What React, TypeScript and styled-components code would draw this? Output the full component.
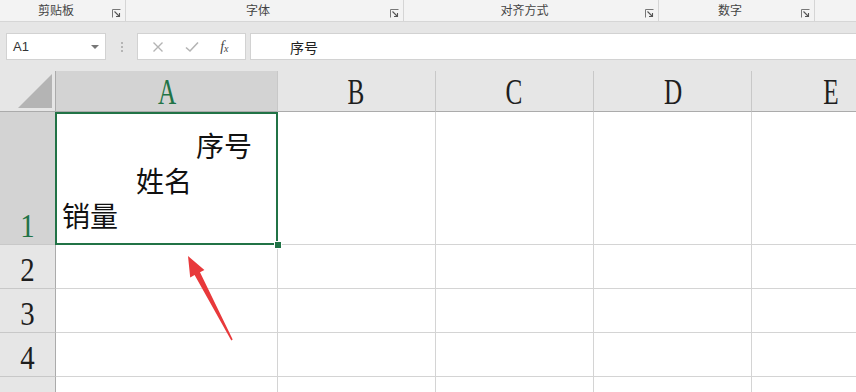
import React from 'react';
import styled, { createGlobalStyle } from 'styled-components';

const GlobalStyle = createGlobalStyle`
  html, body {
    margin: 0;
    padding: 0;
    background: #e6e6e6;
    overflow: hidden;
  }
  body {
    font-family: "Noto Sans CJK SC", "Liberation Sans", sans-serif;
  }
`;

const groups = [
  { label: '剪贴板', width: 126 },
  { label: '字体', width: 278 },
  { label: '对齐方式', width: 255 },
  { label: '数字', width: 156 },
  { label: '', width: 60 },
];

const columns = [
  { name: 'A', width: 222, active: true },
  { name: 'B', width: 158 },
  { name: 'C', width: 158 },
  { name: 'D', width: 158 },
  { name: 'E', width: 158 },
];

// row 5 is only partly on screen, its number sits below the fold
const rows = [
  { n: 1, height: 133, active: true, label: '1' },
  { n: 2, height: 44, label: '2' },
  { n: 3, height: 44, label: '3' },
  { n: 4, height: 44, label: '4' },
  { n: 5, height: 44, label: '' },
];

const cellLines = [
  { text: '序号', indent: 140 },
  { text: '姓名', indent: 80 },
  { text: '销量', indent: 6 },
];

const Launcher = () => (
  <LauncherIcon width="9" height="9" viewBox="0 0 9 9">
    <path d="M0.5 8.5 V0.5 H8.5" fill="none" stroke="#777" strokeWidth="1" />
    <path d="M2.5 2.5 L7.5 7.5 M4 7.5 H7.5 V4" fill="none" stroke="#555" strokeWidth="1.1" />
  </LauncherIcon>
);

const App = () => {
  return (
    <Page>
      <GlobalStyle />
      <Ribbon>
        {groups.map((g, i) => (
          <Group key={i} $width={g.width} $last={i === groups.length - 1}>
            <GroupLabel>{g.label}</GroupLabel>
            {g.label && <Launcher />}
          </Group>
        ))}
      </Ribbon>

      <FormulaBar>
        <NameBox>
          <span>A1</span>
          <DropArrow />
        </NameBox>
        <Dots>
          <i />
          <i />
          <i />
        </Dots>
        <ActionBox>
          <ActionBtn>
            <svg width="12" height="12" viewBox="0 0 12 12">
              <path d="M1.5 1.5 L10.5 10.5 M10.5 1.5 L1.5 10.5" stroke="#b4b4b4" strokeWidth="1.4" />
            </svg>
          </ActionBtn>
          <ActionBtn>
            <svg width="14" height="12" viewBox="0 0 14 12">
              <path d="M1 6.5 L5 10 L13 1.5" fill="none" stroke="#b4b4b4" strokeWidth="1.6" />
            </svg>
          </ActionBtn>
          <FxLabel>
            f<sub>x</sub>
          </FxLabel>
        </ActionBox>
        <FormulaInput>序号</FormulaInput>
      </FormulaBar>

      <Sheet>
        <Grid
          $cols={columns.map((c) => c.width)}
          $rows={rows.map((r) => r.height)}
        >
          <Corner>
            <svg width="34" height="34" viewBox="0 0 34 34">
              <polygon points="0,34 34,34 34,0" fill="#b4b4b4" />
            </svg>
          </Corner>
          {columns.map((c) => (
            <ColHeader key={c.name} $active={c.active}>
              <HeadText $active={c.active}>{c.name}</HeadText>
            </ColHeader>
          ))}
          {rows.map((r) => (
            <React.Fragment key={r.n}>
              <RowHeader $active={r.active}>
                <RowText $active={r.active}>{r.label}</RowText>
              </RowHeader>
              {columns.map((c) =>
                r.n === 1 && c.active ? (
                  <SelectedCell key={c.name}>
                    {cellLines.map((l) => (
                      <CellLine key={l.text} $indent={l.indent}>
                        {l.text}
                      </CellLine>
                    ))}
                    <Handle />
                  </SelectedCell>
                ) : (
                  <Cell key={c.name} />
                )
              )}
            </React.Fragment>
          ))}
        </Grid>
        <ArrowLayer width="856" height="321" viewBox="0 71 856 321">
          <polygon
            points="188,256 204.4,270 200,272.3 232.7,339.6 231.3,340.4 194.6,275.1 190.2,277.4"
            fill="#e8393b"
          />
        </ArrowLayer>
      </Sheet>
    </Page>
  );
};

const Page = styled.div`
  width: 856px;
  height: 392px;
  overflow: hidden;
  background: #e6e6e6;
`;

const Ribbon = styled.div`
  display: flex;
  height: 22px;
  background: #f3f3f3;
  border-bottom: 1px solid #d6d6d6;
  box-sizing: border-box;
`;

const Group = styled.div<{ $width: number; $last?: boolean }>`
  flex: 0 0 ${(p) => p.$width}px;
  display: flex;
  align-items: center;
  padding-right: 4px;
  box-sizing: border-box;
  border-right: ${(p) => (p.$last ? 'none' : '1px solid #d5d5d5')};
`;

const GroupLabel = styled.span`
  flex: 1;
  text-align: center;
  font-size: 12px;
  color: #444;
  margin-top: -2px;
`;

const LauncherIcon = styled.svg`
  display: block;
  margin-top: 5px;
`;

const FormulaBar = styled.div`
  display: flex;
  align-items: stretch;
  height: 27px;
  margin-top: 11px;
  padding-left: 6px;
`;

const NameBox = styled.div`
  width: 100px;
  box-sizing: border-box;
  background: #fff;
  border: 1px solid #d2d2d2;
  display: flex;
  align-items: center;
  justify-content: space-between;
  padding: 0 6px 0 6px;
  font-family: "Liberation Sans", sans-serif;
  font-size: 13px;
  color: #333;
`;

const DropArrow = styled.span`
  width: 0;
  height: 0;
  border-left: 4px solid transparent;
  border-right: 4px solid transparent;
  border-top: 4px solid #777;
`;

const Dots = styled.div`
  width: 31px;
  display: flex;
  flex-direction: column;
  align-items: center;
  justify-content: center;
  gap: 2px;

  i {
    width: 2px;
    height: 2px;
    background: #b5b5b5;
  }
`;

const ActionBox = styled.div`
  width: 109px;
  box-sizing: border-box;
  background: #fff;
  border: 1px solid #d2d2d2;
  display: flex;
  align-items: center;
  justify-content: space-around;
  padding: 0 6px 0 4px;
`;

const ActionBtn = styled.span`
  display: flex;
  align-items: center;
`;

const FxLabel = styled.span`
  font-family: "Liberation Serif", serif;
  font-style: italic;
  font-size: 14px;
  color: #444;

  sub {
    font-size: 10px;
    vertical-align: -1px;
  }
`;

const FormulaInput = styled.div`
  flex: 1;
  margin-left: 4px;
  background: #fff;
  border: 1px solid #d2d2d2;
  border-right: none;
  display: flex;
  align-items: center;
  padding-left: 39px;
  font-size: 14px;
  color: #222;
`;

const Sheet = styled.div`
  position: relative;
  margin-top: 11px;
`;

const Grid = styled.div<{ $cols: number[]; $rows: number[] }>`
  display: grid;
  grid-template-columns: 56px ${(p) => p.$cols.map((w) => `${w}px`).join(' ')};
  grid-template-rows: 41px ${(p) => p.$rows.map((h) => `${h}px`).join(' ')};
  background: #fff;
`;

const Corner = styled.div`
  background: #e6e6e6;
  border-right: 1px solid #ababab;
  border-bottom: 1px solid #ababab;
  display: flex;
  align-items: flex-end;
  justify-content: flex-end;
  padding: 0 3px 3px 0;
`;

const ColHeader = styled.div<{ $active?: boolean }>`
  background: ${(p) => (p.$active ? '#d3d3d3' : '#e6e6e6')};
  border-right: 1px solid #c8c8c8;
  border-bottom: 1px solid #ababab;
  display: flex;
  align-items: flex-end;
  justify-content: center;
  padding-bottom: 1px;
  overflow: hidden;
`;

const HeadText = styled.span<{ $active?: boolean }>`
  display: inline-block;
  font-family: "Liberation Serif", serif;
  font-size: 36px;
  line-height: 36px;
  transform: scaleX(0.7);
  color: ${(p) => (p.$active ? '#217346' : '#1e1e1e')};
`;

const RowHeader = styled.div<{ $active?: boolean }>`
  background: ${(p) => (p.$active ? '#d3d3d3' : '#e6e6e6')};
  border-right: 1px solid #ababab;
  border-bottom: 1px solid #c8c8c8;
  display: flex;
  align-items: flex-end;
  justify-content: center;
  padding-bottom: 1px;
  overflow: hidden;
`;

const RowText = styled(HeadText)`
  font-size: 34px;
  line-height: 34px;
  transform: scaleX(0.85);
`;

const Cell = styled.div`
  border-right: 1px solid #d4d4d4;
  border-bottom: 1px solid #d4d4d4;
`;

const SelectedCell = styled(Cell)`
  position: relative;
  display: flex;
  flex-direction: column;
  justify-content: flex-end;
  padding-bottom: 11px;

  &::after {
    content: '';
    position: absolute;
    inset: 0 -1px -1px -1px;
    border: 2px solid #217346;
    pointer-events: none;
  }
`;

const CellLine = styled.div<{ $indent: number }>`
  padding-left: ${(p) => p.$indent}px;
  font-size: 28px;
  line-height: 35px;
  color: #111;
  white-space: nowrap;
`;

const Handle = styled.span`
  position: absolute;
  right: -5px;
  bottom: -5px;
  width: 6px;
  height: 6px;
  background: #217346;
  border: 1px solid #fff;
  z-index: 2;
`;

const ArrowLayer = styled.svg`
  position: absolute;
  left: 0;
  top: 0;
  pointer-events: none;
`;

export default App;
